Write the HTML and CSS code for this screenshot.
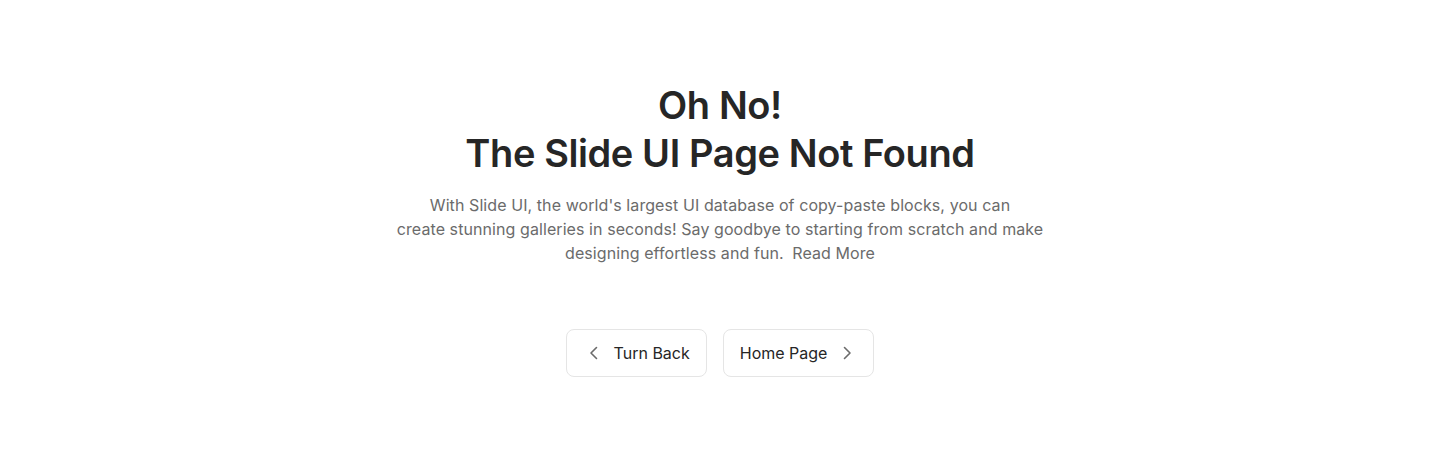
FILE: index.html
```html
<!DOCTYPE html>
<html lang="en">
<head>
<meta charset="utf-8">
<title>Page Not Found</title>
<link rel="stylesheet" href="styles.css">
</head>
<body>
<main class="page">
  <section class="content">
    <h1 class="title">Oh No!<br>The Slide UI Page Not Found</h1>
    <p class="lead">With Slide UI, the world's largest UI database of copy-paste blocks, you can<br>create stunning galleries in seconds! Say goodbye to starting from scratch and make<br>designing effortless and fun. <a class="more" href="#">Read More</a></p>
    <div class="actions">
      <a class="btn btn-back" href="#">
        <svg class="icon" viewBox="0 0 16 16" fill="none" stroke="currentColor" stroke-width="1.6" stroke-linecap="round" stroke-linejoin="round"><path d="M10.5 2.5 5 8l5.5 5.5"/></svg>
        <span>Turn Back</span>
      </a>
      <a class="btn btn-home" href="#">
        <span>Home Page</span>
        <svg class="icon" viewBox="0 0 16 16" fill="none" stroke="currentColor" stroke-width="1.6" stroke-linecap="round" stroke-linejoin="round"><path d="M5.5 2.5 11 8l-5.5 5.5"/></svg>
      </a>
    </div>
  </section>
</main>
</body>
</html>
```
FILE: styles.css
```css
* { box-sizing: border-box; }
html, body { margin: 0; padding: 0; background: #ffffff; }
body {
  font-family: Inter, "Noto Sans", sans-serif;
  color: #262626;
}
.page {
  padding: 81px 16px 80px;
  display: flex;
  justify-content: center;
}
.content {
  display: flex;
  flex-direction: column;
  align-items: center;
  text-align: center;
}
.title {
  margin: 0;
  font-size: 38px;
  line-height: 48px;
  font-weight: 600;
  letter-spacing: -0.4px;
  color: #262626;
}
.lead {
  margin: 16px 0 0;
  font-size: 16px;
  line-height: 24px;
  letter-spacing: 0.08px;
  color: #6b6b6b;
}
.more {
  color: #6b6b6b;
  text-decoration: none;
  margin-left: 4px;
}
.actions {
  margin-top: 64px;
  display: flex;
  gap: 16px;
}
.btn {
  height: 48px;
  display: inline-flex;
  align-items: center;
  gap: 12px;
  border: 1px solid #e5e5e5;
  border-radius: 8px;
  background: #fff;
  color: #262626;
  text-decoration: none;
  font-size: 16px;
  font-weight: 400;
}
.btn-back { padding: 0 16px 0 19px; }
.btn-home { padding: 0 18px 0 16px; }
.icon {
  width: 16px;
  height: 16px;
  color: #6b6b6b;
  flex: none;
}
```
